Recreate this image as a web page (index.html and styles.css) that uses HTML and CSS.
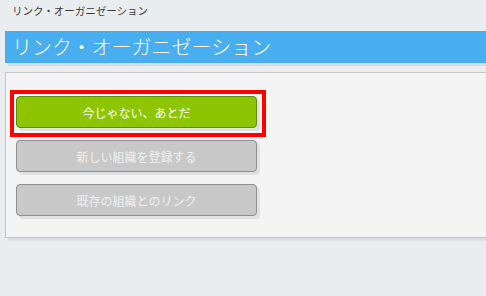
FILE: index.html
```html
<!DOCTYPE html>
<html lang="ja">

<head>
  <meta charset="UTF-8">
  <meta name="viewport" content="width=device-width, initial-scale=1.0">
  <title>リンク・オーガニゼーション</title>
  <link rel="stylesheet" href="styles.css">
</head>

<body>
  <div class="breadcrumb">リンク・オーガニゼーション</div>

  <h1 class="page__title">リンク・オーガニゼーション</h1>

  <div class="panel">
    <div class="choice choice--selected">
      <button class="btn btn--green">今じゃない、あとだ</button>
    </div>
    <div class="choice">
      <button class="btn btn--gray">新しい組織を登録する</button>
    </div>
    <div class="choice">
      <button class="btn btn--gray">既存の組織とのリンク</button>
    </div>
  </div>
</body>

</html>
```

FILE: styles.css
```css
* {
  padding: 0;
  margin: 0;
  box-sizing: border-box;
}

body {
  height: 100vh;
  padding-left: 5px;
  font-family: "Noto Sans CJK JP", "Noto Sans", sans-serif;
  background-color: #e9edf0;
  overflow: hidden;
}

.breadcrumb {
  height: 31px;
  padding: 4px 0 0 7px;
  font-size: 10.5px;
  line-height: 14px;
  color: #3a3a3a;
}

.page__title {
  width: 500px;
  height: 32px;
  padding-left: 7px;
  font-size: 20px;
  font-weight: 300;
  line-height: 32px;
  color: white;
  background-color: #48aef0;
  box-shadow: 3px 3px 0 #d9dde1;
}

.panel {
  width: 500px;
  height: 166px;
  margin-top: 9px;
  padding: 17px 0 0 4px;
  background-color: #f4f4f4;
  border: 1px solid #c6c6c6;
  box-shadow: 3px 3px 0 #d9dde1;
}

.choice {
  width: 256px;
  padding: 0 0 12px 6px;
}

.choice--selected {
  height: 47px;
  margin-bottom: 3px;
  padding: 2px 5px 5px 2px;
  border: 4px solid #ff0000;
}

.btn {
  display: block;
  width: 241px;
  height: 32px;
  font-family: inherit;
  font-size: 12px;
  border-radius: 4px;
  box-shadow: 3px 3px 0 #e0e0e0;
}

.btn--green {
  color: white;
  background-color: #8dc600;
  border: 1px solid #5b8f00;
}

.btn--gray {
  color: #f0f0f0;
  background-color: #c8c8c8;
  border: 1px solid #8f8f8f;
}
```
